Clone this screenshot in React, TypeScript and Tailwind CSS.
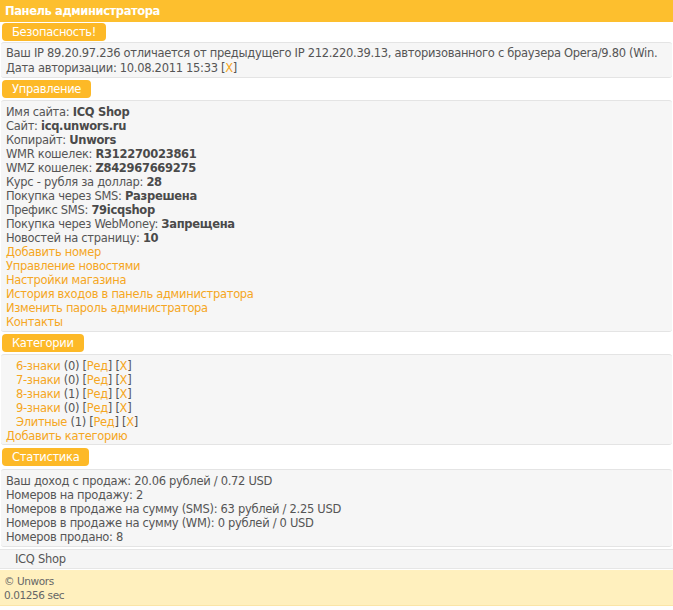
const links = [
  "Добавить номер",
  "Управление новостями",
  "Настройки магазина",
  "История входов в панель администратора",
  "Изменить пароль администратора",
  "Контакты",
];

const settings: [string, string][] = [
  ["Имя сайта", "ICQ Shop"],
  ["Сайт", "icq.unwors.ru"],
  ["Копирайт", "Unwors"],
  ["WMR кошелек", "R312270023861"],
  ["WMZ кошелек", "Z842967669275"],
  ["Курс - рубля за доллар", "28"],
  ["Покупка через SMS", "Разрешена"],
  ["Префикс SMS", "79icqshop"],
  ["Покупка через WebMoney", "Запрещена"],
  ["Новостей на страницу", "10"],
];

const categories: [string, number][] = [
  ["6-знаки", 0],
  ["7-знаки", 0],
  ["8-знаки", 1],
  ["9-знаки", 0],
  ["Элитные", 1],
];

function Tab({ children, className = "" }: { children: React.ReactNode; className?: string }) {
  return (
    <div className={"flex px-[2px] " + className}>
      <span className="rounded-[4px] bg-[#fdb927] px-[10px] h-[18px] leading-[18px] text-white">
        {children}
      </span>
    </div>
  );
}

function Box({ children, className = "" }: { children: React.ReactNode; className?: string }) {
  return (
    <div
      className={
        "mx-[1px] rounded-[3px] border-y border-[#e4e4e4] bg-[#f6f6f6] px-[5px] leading-[14px] " +
        className
      }
    >
      {children}
    </div>
  );
}

function A({ children }: { children: React.ReactNode }) {
  return <a className="text-[#f5a623] cursor-pointer">{children}</a>;
}

export default function App() {
  return (
    <div className="w-[673px] bg-white text-[11.5px] text-[#555] font-['DejaVu_Sans',Tahoma,sans-serif] tracking-[-0.3px]">
      <div className="h-[22px] bg-[#fdbf2e] px-[5px] leading-[22px] font-bold text-white tracking-[-0.4px]">
        Панель администратора
      </div>

      <Tab className="mt-[1px]">Безопасность!</Tab>
      <Box className="mt-[1px] pt-[3px] pb-[1px] whitespace-nowrap leading-[15px]">
        <div>
          Ваш IP 89.20.97.236 отличается от предыдущего IP 212.220.39.13, авторизованного с браузера Opera/9.80 (Win.
        </div>
        <div>
          Дата авторизации: 10.08.2011 15:33 [<A>X</A>]
        </div>
      </Box>

      <Tab className="mt-[2px]">Управление</Tab>
      <Box className="mt-[2px] pt-[4px] pb-[2px]">
        {settings.map(([k, v]) => (
          <div key={k}>
            {k}: <b className="text-[#4a4a4a]">{v}</b>
          </div>
        ))}
        {links.map((l) => (
          <div key={l}>
            <A>{l}</A>
          </div>
        ))}
      </Box>

      <Tab className="mt-[2px]">Категории</Tab>
      <Box className="mt-[2px] pt-[4px] pb-[1px]">
        {categories.map(([name, n]) => (
          <div key={name} className="pl-[10px]">
            <A>{name}</A> ({n}) [<A>Ред</A>] [<A>X</A>]
          </div>
        ))}
        <div>
          <A>Добавить категорию</A>
        </div>
      </Box>

      <Tab className="mt-[3px]">Статистика</Tab>
      <Box className="mt-[3px] pt-[4px] pb-[2px]">
        <div>Ваш доход с продаж: 20.06 рублей / 0.72 USD</div>
        <div>Номеров на продажу: 2</div>
        <div>Номеров в продаже на сумму (SMS): 63 рублей / 2.25 USD</div>
        <div>Номеров в продаже на сумму (WM): 0 рублей / 0 USD</div>
        <div>Номеров продано: 8</div>
      </Box>

      <div className="mt-[2px] border-y border-[#e6e6e6] bg-[#f5f5f5] h-[20px] px-[15px] leading-[19px]">
        ICQ Shop
      </div>
      <div className="mt-[1px] bg-[#fff0be] border-b border-[#fbe5a6] h-[36px] px-[4px] py-[4px] text-[10.5px] leading-[14px] text-[#666] tracking-[-0.4px]">
        <div>© Unwors</div>
        <div>0.01256 sec</div>
      </div>
    </div>
  );
}
